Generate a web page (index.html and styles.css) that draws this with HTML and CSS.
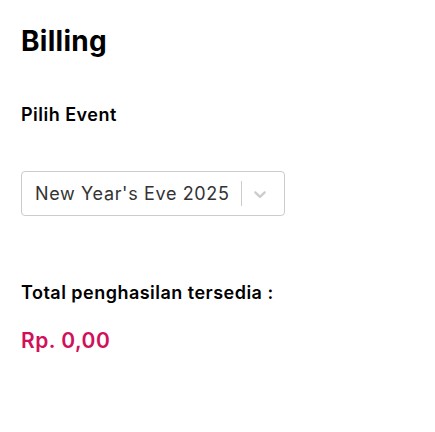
FILE: index.html
```html
<!DOCTYPE html>
<html>
<head>
<meta charset="utf-8">
<link rel="stylesheet" href="styles.css">
</head>
<body>
<div class="page">
  <h1 class="title">Billing</h1>
  <div class="label">Pilih Event</div>
  <div class="select">
    <div class="select-value">New Year's Eve 2025</div>
    <div class="select-indicators">
      <span class="separator"></span>
      <span class="chevron">
        <svg width="20" height="20" viewBox="0 0 20 20"><path fill="#cccccc" d="M4.516 7.548c0.436-0.446 1.043-0.481 1.576 0l3.908 3.747 3.908-3.747c0.533-0.481 1.141-0.446 1.574 0 0.436 0.445 0.408 1.197 0 1.615-0.406 0.418-4.695 4.502-4.695 4.502-0.217 0.223-0.502 0.335-0.787 0.335s-0.57-0.112-0.789-0.335c0 0-4.287-4.084-4.695-4.502s-0.436-1.170 0-1.615z"/></svg>
      </span>
    </div>
  </div>
  <div class="label total-label">Total penghasilan tersedia :</div>
  <div class="amount">Rp. 0,00</div>
</div>
</body>
</html>
```
FILE: styles.css
```css
* { box-sizing: border-box; }
body {
  margin: 0;
  background: #ffffff;
  font-family: Inter, "Noto Sans", sans-serif;
  color: #000;
  letter-spacing: 0.03em;
}
.page {
  padding: 22px 21px;
  display: flex;
  flex-direction: column;
  align-items: flex-start;
}
.title {
  margin: 0;
  font-size: 28px;
  font-weight: 700;
  line-height: 38px;
  letter-spacing: 0.01em;
}
.label {
  margin-top: 43px;
  font-size: 18px;
  font-weight: 600;
  line-height: 24px;
}
.select {
  margin-top: 44px;
  height: 45px;
  width: 264px;
  border: 1px solid #cccccc;
  border-radius: 4px;
  display: flex;
  align-items: center;
  padding-left: 13px;
  padding-right: 6px;
}
.select-value {
  flex: 1;
  font-size: 18px;
  color: #333333;
  white-space: nowrap;
  letter-spacing: 0.036em;
}
.select-indicators {
  display: flex;
  align-items: center;
  align-self: stretch;
}
.separator {
  width: 1px;
  align-self: stretch;
  margin: 9px 0;
  background: #cccccc;
}
.chevron {
  display: flex;
  padding: 8px;
  width: 36px;
  justify-content: center;
}
.total-label {
  margin-top: 65px;
}
.amount {
  margin-top: 22px;
  font-size: 21px;
  font-weight: 600;
  color: #d1105a;
  line-height: 28px;
}
```
